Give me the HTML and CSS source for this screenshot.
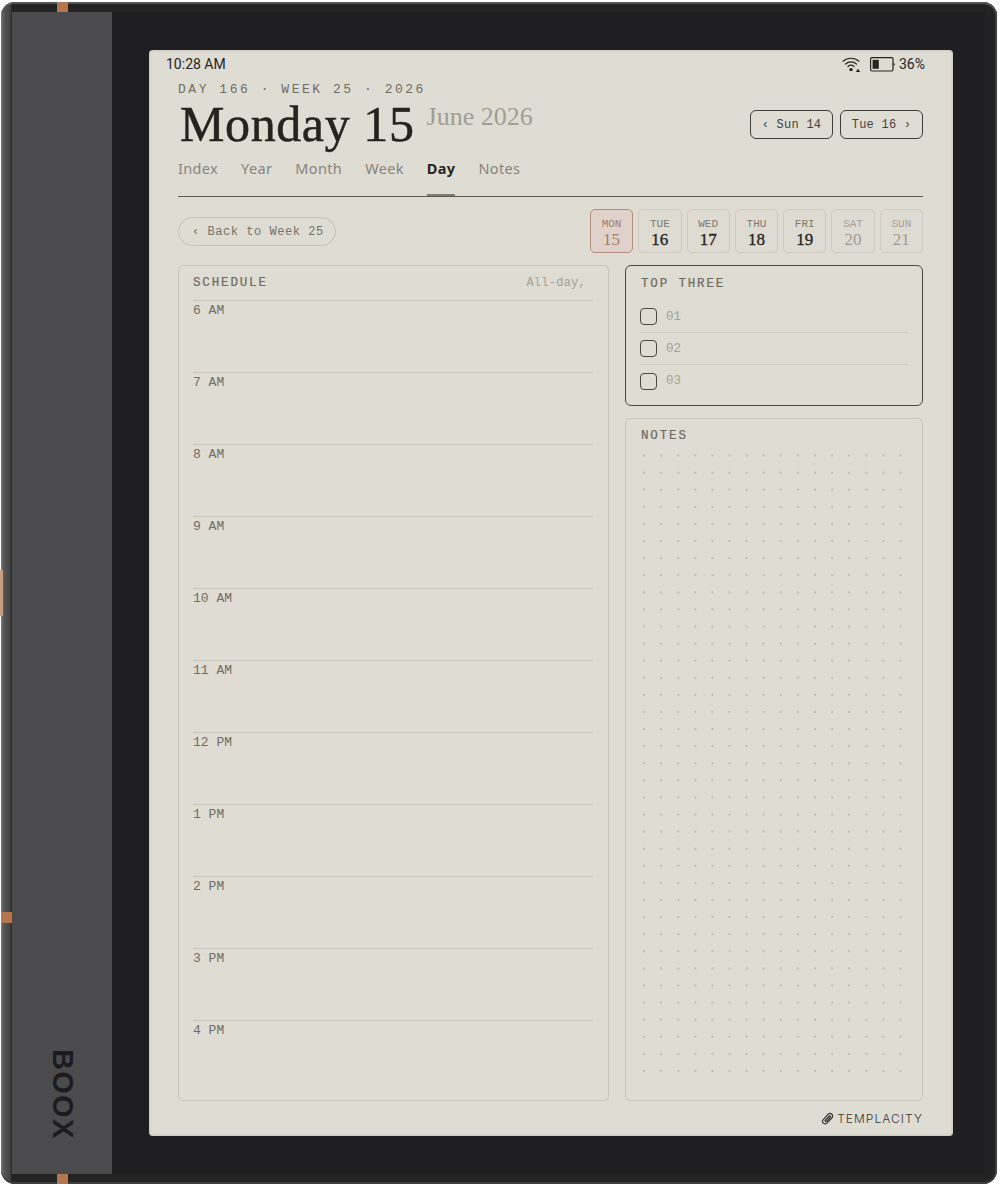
FILE: index.html
```html
<!DOCTYPE html>
<html lang="en">
<head>
    <meta charset="UTF-8">
    <meta name="viewport" content="width=device-width, initial-scale=1.0">
    <title>Monday 15 June 2026</title>
    <link rel="stylesheet" href="styles.css">
</head>
<body>
    <div class="device">
        <span class="mark mark-top"></span>
        <span class="mark mark-bottom"></span>
        <span class="mark mark-side"></span>
        <span class="side-button"></span>
        <div class="spine">
            <div class="boox">BOOX</div>
        </div>
        <div class="bezel">
            <div class="screen">
                <div class="status">
                    <span>10:28 AM</span>
                    <div class="status-right">
                        <svg class="wifi" width="19" height="17" viewBox="0 0 19 17" fill="none" stroke="#26251f" stroke-width="1.2" stroke-linecap="round">
                            <path d="M1 5.4C5.5 1.2 12.5 1.2 17 5.4"/>
                            <path d="M3.6 8C6.6 5.2 11.4 5.2 14.4 8"/>
                            <path d="M6 10.5C7.7 9 10.3 9 12 10.5"/>
                            <circle cx="9" cy="13.6" r="1.7" fill="#26251f" stroke="none"/>
                            <path d="M16 12.8L18.2 16H13.8Z" fill="#26251f" stroke="none"/>
                        </svg>
                        <svg class="battery" width="25" height="15" viewBox="0 0 25 15" fill="none">
                            <rect x="0.6" y="0.6" width="22.4" height="13.4" rx="1.4" stroke="#26251f" stroke-width="1.2"/>
                            <rect x="2.6" y="2.8" width="6.2" height="9" fill="#26251f"/>
                            <path d="M23.6 5.4L25 7.3L23.6 9.2Z" fill="#26251f"/>
                        </svg>
                        <span>36%</span>
                    </div>
                </div>

                <div class="page">
                    <div class="kicker">DAY 166 · WEEK 25 · 2026</div>
                    <div class="head">
                        <div class="title-wrap">
                            <h1>Monday 15</h1>
                            <span class="month">June 2026</span>
                        </div>
                        <div class="day-nav">
                            <a class="day-btn">‹ Sun 14</a>
                            <a class="day-btn">Tue 16 ›</a>
                        </div>
                    </div>

                    <div class="tabs">
                        <a>Index</a>
                        <a>Year</a>
                        <a>Month</a>
                        <a>Week</a>
                        <a class="active">Day</a>
                        <a>Notes</a>
                    </div>

                    <div class="toolbar">
                        <a class="back">‹ Back to Week 25</a>
                        <div class="chips">
                            <div class="chip today"><span>MON</span><b>15</b></div>
                            <div class="chip"><span>TUE</span><b>16</b></div>
                            <div class="chip"><span>WED</span><b>17</b></div>
                            <div class="chip"><span>THU</span><b>18</b></div>
                            <div class="chip"><span>FRI</span><b>19</b></div>
                            <div class="chip weekend"><span>SAT</span><b>20</b></div>
                            <div class="chip weekend"><span>SUN</span><b>21</b></div>
                        </div>
                    </div>

                    <div class="columns">
                        <div class="card schedule">
                            <div class="schedule-head">
                                <span class="label">SCHEDULE</span>
                                <span class="allday">All-day,</span>
                            </div>
                            <div class="hour">6 AM</div>
                            <div class="hour">7 AM</div>
                            <div class="hour">8 AM</div>
                            <div class="hour">9 AM</div>
                            <div class="hour">10 AM</div>
                            <div class="hour">11 AM</div>
                            <div class="hour">12 PM</div>
                            <div class="hour">1 PM</div>
                            <div class="hour">2 PM</div>
                            <div class="hour">3 PM</div>
                            <div class="hour">4 PM</div>
                        </div>

                        <div class="side">
                            <div class="card top-three">
                                <div class="label">TOP THREE</div>
                                <div class="task"><i></i>01</div>
                                <div class="task"><i></i>02</div>
                                <div class="task"><i></i>03</div>
                            </div>
                            <div class="card notes">
                                <div class="label">NOTES</div>
                                <div class="dots"></div>
                            </div>
                        </div>
                    </div>

                    <div class="brand">
                        <svg width="13" height="13" viewBox="0 0 13 13" fill="none" stroke="#33322d" stroke-width="1.2" stroke-linecap="round">
                            <path d="M1.9 8.1L7.2 2.2C8.8 0.6 11.4 1.6 11.6 3.8C11.7 4.7 11.3 5.5 10.8 6L5.9 11.1C4.4 12.5 1.8 11.9 1.4 9.7C1.3 9 1.5 8.5 1.9 8.1Z"/>
                            <path d="M4 8.6L8 4.3C8.9 3.5 10 4.6 9.2 5.5L5.6 9.3C4.9 9.9 4 9.3 4.4 8.4"/>
                        </svg>
                        <span>TEMPLACITY</span>
                    </div>
                </div>
            </div>
        </div>
    </div>
</body>
</html>
```

FILE: styles.css
```css
* {
    box-sizing: border-box;
}

body {
    margin: 0;
    background-color: #fff;
    font-family: "Liberation Mono", monospace;
    color: #26251f;
}

/* Device shell */
.device {
    position: relative;
    display: flex;
    width: 996px;
    height: 1182px;
    margin: 2px 0 0 1px;
    padding: 10px 12px 10px 11px;
    border-radius: 14px;
    background: linear-gradient(90deg, #7c7c7c 0, #555 3px, #444 9px, #232324 11px, #232324 100%);
    box-shadow: inset 0 2px 0 #565656, inset -2px 0 0 #3e3e3e, inset 0 -2px 0 #3e3e3e;
}
.spine {
    display: flex;
    flex-direction: column;
    align-items: center;
    justify-content: flex-end;
    width: 100px;
    padding-bottom: 34px;
    background-color: #4b4b4d;
}
.boox {
    writing-mode: vertical-rl;
    font-family: "Liberation Sans", sans-serif;
    font-size: 29px;
    font-weight: 700;
    line-height: 1;
    letter-spacing: 1.3px;
    color: #1c1c1e;
}
.bezel {
    flex: 1;
    padding: 38px 32px 38px 37px;
    background-color: #1f1e20;
}
.mark {
    position: absolute;
    background-color: #b5754f;
}
.mark-top {
    top: 0;
    left: 56px;
    width: 11px;
    height: 10px;
}
.mark-bottom {
    bottom: 0;
    left: 56px;
    width: 11px;
    height: 10px;
}
.mark-side {
    top: 910px;
    left: 0;
    width: 11px;
    height: 11px;
}
.side-button {
    position: absolute;
    top: 568px;
    left: -1px;
    width: 3px;
    height: 46px;
    background-color: #c69c84;
}

/* Screen */
.screen {
    height: 100%;
    border-radius: 4px;
    background-color: #dfdcd4;
    box-shadow: inset 0 0 3px #b5b3ac;
}
.status {
    display: flex;
    align-items: center;
    justify-content: space-between;
    height: 28px;
    padding: 0 28px 0 17px;
    font-family: Roboto, sans-serif;
    font-size: 14px;
    color: #26251f;
}
.status-right {
    display: flex;
    align-items: center;
}
.wifi {
    margin-right: 9px;
}
.battery {
    margin-right: 4px;
}
.page {
    padding: 0 30px 0 29px;
}

/* Header */
.kicker {
    height: 24px;
    font-size: 13px;
    line-height: 24px;
    letter-spacing: 2.53px;
    color: #6f6e64;
}
.head {
    display: flex;
    justify-content: space-between;
    height: 48px;
}
.title-wrap {
    display: flex;
    align-items: flex-start;
}
h1 {
    margin: 0 0 0 2px;
    font-family: "Liberation Serif", serif;
    font-size: 50px;
    font-weight: 400;
    line-height: 45px;
    letter-spacing: 0.6px;
    color: #24231e;
    -webkit-text-stroke: 0.5px #24231e;
}
.month {
    margin: 0 0 0 12px;
    font-family: "Liberation Serif", serif;
    font-size: 26px;
    line-height: 30px;
    color: #a09e95;
}
.day-nav {
    display: flex;
    gap: 7px;
    padding-top: 8px;
}
.day-btn {
    width: 83px;
    height: 29px;
    border: 1px solid #3f3e38;
    border-radius: 6px;
    font-size: 12px;
    line-height: 29px;
    letter-spacing: 0.25px;
    text-align: center;
    color: #44433c;
}

/* Tabs */
.tabs {
    display: flex;
    gap: 23px;
    height: 47px;
    padding-top: 6px;
    border-bottom: 1px solid #5c5b53;
    font-family: "Noto Sans", sans-serif;
    font-size: 14.5px;
    letter-spacing: 0.35px;
    color: #87857c;
}
.tabs a {
    height: 40px;
    line-height: 24px;
}
.tabs .active {
    border-bottom: 2px solid #7b8072;
    font-weight: 700;
    color: #26251f;
}

/* Back link and day chips */
.toolbar {
    display: flex;
    align-items: center;
    justify-content: space-between;
    margin: 12px 0;
}
.back {
    width: 158px;
    height: 29px;
    padding-left: 13px;
    border: 1px solid #c2c0b7;
    border-radius: 15px;
    font-size: 12px;
    line-height: 28px;
    letter-spacing: 0.55px;
    color: #74736a;
}
.chips {
    display: flex;
    gap: 5px;
}
.chip {
    display: flex;
    flex-direction: column;
    align-items: center;
    width: 43.3px;
    height: 44px;
    padding-top: 8px;
    border: 1px solid #cdcbc2;
    border-radius: 5px;
    background-color: #dedbd3;
}
.chip span {
    font-size: 11px;
    line-height: 13px;
    color: #7c7b71;
}
.chip b {
    font-family: "Liberation Serif", serif;
    font-size: 17px;
    font-weight: 400;
    line-height: 17px;
    color: #26251f;
    -webkit-text-stroke: 0.35px #26251f;
}
.chip.today {
    border: 1.5px solid #b58e80;
    background-color: #e0d2cb;
}
.chip.today span {
    color: #a27a6e;
}
.chip.today b {
    color: #a27a6e;
    -webkit-text-stroke: 0;
}
.chip.weekend span {
    color: #a3a198;
}
.chip.weekend b {
    color: #a09e95;
    -webkit-text-stroke: 0;
}

/* Main columns */
.columns {
    display: flex;
    gap: 16px;
    height: 836px;
}
.card {
    border: 1px solid #c6c4bb;
    border-radius: 5px;
}
.label {
    font-size: 12.5px;
    font-weight: 400;
    line-height: 16px;
    letter-spacing: 1.85px;
    color: #6c6b60;
    -webkit-text-stroke: 0.2px #6c6b60;
}
.schedule {
    width: 431px;
    padding: 0 15px 0 14px;
}
.schedule-head {
    display: flex;
    align-items: center;
    justify-content: space-between;
    height: 34px;
    padding: 0 7px 0 0;
}
.allday {
    font-size: 12px;
    letter-spacing: 0.25px;
    color: #a3a198;
}
.hour {
    height: 72px;
    padding-top: 1px;
    border-top: 1px solid #c6c4bb;
    font-size: 13px;
    line-height: 17px;
    color: #6f6e64;
}
.side {
    display: flex;
    flex-direction: column;
    gap: 12px;
    width: 298px;
}
.top-three {
    height: 141px;
    padding: 10px 14px 0 14px;
    border: 1.5px solid #4a4942;
    border-radius: 6px;
}
.top-three .label {
    margin-bottom: 9px;
    padding-left: 1px;
}
.task {
    display: flex;
    align-items: center;
    gap: 9px;
    height: 32px;
    border-bottom: 1px solid #cbc9c0;
    font-size: 12.5px;
    color: #a5a39a;
}
.task:last-child {
    border-bottom: none;
}
.task i {
    width: 17px;
    height: 17px;
    border: 1.5px solid #4a4942;
    border-radius: 4px;
}
.notes {
    flex: 1;
    padding: 9px 15px 0 14px;
}
.notes .label {
    padding-left: 1px;
}
.dots {
    height: 633px;
    margin-top: 3px;
    background-image: radial-gradient(circle at center, #bdbbb1 0.9px, transparent 1.2px);
    background-size: 17.1px 17.1px;
    background-position: -4.5px 0;
}

/* Footer brand */
.brand {
    display: flex;
    align-items: center;
    justify-content: flex-end;
    gap: 3px;
    height: 35px;
    font-family: Inter, sans-serif;
    font-size: 12px;
    font-weight: 300;
    letter-spacing: 1.05px;
    color: #3a3933;
}
```
